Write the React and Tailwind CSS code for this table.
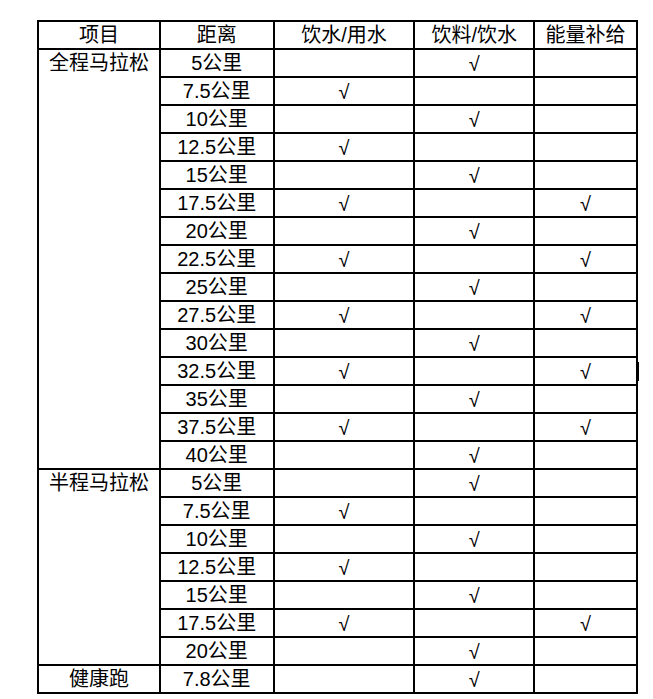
const full = ['5', '7.5', '10', '12.5', '15', '17.5', '20', '22.5', '25', '27.5', '30', '32.5', '35', '37.5', '40']
const half = ['5', '7.5', '10', '12.5', '15', '17.5', '20']

const marks = (km) => {
  const n = parseFloat(km)
  const isHalf = km.includes('.5')
  return {
    water: isHalf,
    drink: !isHalf,
    energy: isHalf && n >= 17.5,
  }
}

const cell = 'border-2 border-black p-0 text-center align-middle'

function Check({ on }) {
  return on ? <span className="relative top-[1px] text-[20px]">√</span> : null
}

function Rows({ label, list, override }) {
  return list.map((km, i) => {
    const m = override || marks(km)
    return (
      <tr key={label + km} className="h-[28px]">
        {i === 0 && (
          <td rowSpan={list.length} className="border-2 border-black p-0 pt-[2px] text-center align-top">
            {label}
          </td>
        )}
        <td className={cell}>{km}公里</td>
        <td className={cell}><Check on={m.water} /></td>
        <td className={cell}><Check on={m.drink} /></td>
        <td className={cell}><Check on={m.energy} /></td>
      </tr>
    )
  })
}

export default function App() {
  return (
    <div className="min-h-[699px] bg-white pt-[20px] pl-[37px] text-black" style={{ fontFamily: '"Liberation Sans", "Noto Sans CJK SC", sans-serif' }}>
      <div className="relative w-[601px]">
        <table className="border-collapse table-fixed text-[20px] leading-[22px]">
          <colgroup>
            <col className="w-[122px]" />
            <col className="w-[114px]" />
            <col className="w-[141px]" />
            <col className="w-[120px]" />
            <col className="w-[103px]" />
          </colgroup>
          <thead>
            <tr className="h-[28px]">
              <th className={cell + ' font-normal'}>项目</th>
              <th className={cell + ' font-normal'}>距离</th>
              <th className={cell + ' font-normal'}>饮水/用水</th>
              <th className={cell + ' font-normal'}>饮料/饮水</th>
              <th className={cell + ' font-normal'}>能量补给</th>
            </tr>
          </thead>
          <tbody>
            <Rows label="全程马拉松" list={full} />
            <Rows label="半程马拉松" list={half} />
            <Rows label="健康跑" list={['7.8']} override={{ water: false, drink: true, energy: false }} />
          </tbody>
        </table>
        <div className="absolute left-[600px] top-[342px] h-[19px] w-[2px] bg-black" />
      </div>
    </div>
  )
}
